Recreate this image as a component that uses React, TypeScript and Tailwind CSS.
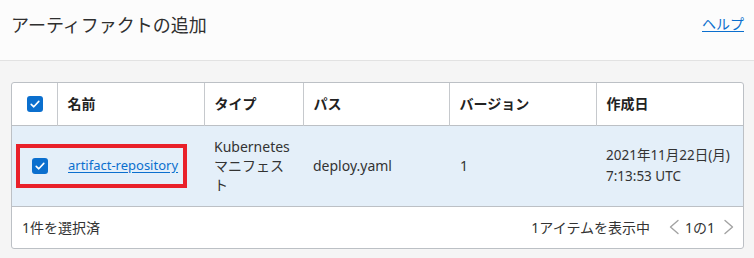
import React from 'react';

const font = { fontFamily: '"Noto Sans", "Noto Sans CJK JP", sans-serif' };

function Checkbox() {
  return (
    <span className="inline-flex h-[16px] w-[16px] items-center justify-center rounded-[3px] bg-[#0b6fce]">
      <svg width="12" height="12" viewBox="0 0 12 12" fill="none">
        <path d="M2.2 6.3 L4.8 8.8 L9.8 3.4" stroke="white" strokeWidth="1.6" strokeLinecap="round" strokeLinejoin="round" />
      </svg>
    </span>
  );
}

function Chevron({ dir }: { dir: 'left' | 'right' }) {
  return (
    <svg width="12" height="16" viewBox="0 0 12 16" fill="none">
      <path
        d={dir === 'left' ? 'M10 1.5 L2.5 8 L10 14.5' : 'M2 1.5 L9.5 8 L2 14.5'}
        stroke="#a3a3a3"
        strokeWidth="1.4"
        strokeLinecap="round"
        strokeLinejoin="round"
      />
    </svg>
  );
}

export default function App() {
  const headers = ['名前', 'タイプ', 'パス', 'バージョン', '作成日'];
  return (
    <div className="h-[258px] w-[754px] overflow-hidden bg-[#f5f5f5] text-[#333]" style={font}>
      <div className="flex h-[61px] items-start justify-between border-b border-[#e2e2e2] bg-[#fcfcfc] pl-[11px] pr-[10px] pt-[11px]">
        <h1 className="text-[18px] font-normal leading-[28px] text-[#2f2f2f]">アーティファクトの追加</h1>
        <a href="#" className="mt-[3px] text-[14px] leading-[20px] text-[#0b6fce] underline underline-offset-2">
          ヘルプ
        </a>
      </div>

      <div className="ml-[11px] mt-[21px] w-[733px] overflow-hidden rounded-[3px] border border-[#bcc0c5] bg-white">
        <table className="w-full table-fixed border-collapse text-[14px]">
          <colgroup>
            <col className="w-[45px]" />
            <col className="w-[147px]" />
            <col className="w-[99px]" />
            <col className="w-[146px]" />
            <col className="w-[147px]" />
            <col />
          </colgroup>
          <thead>
            <tr className="h-[42px] border-b border-[#bcc0c5]">
              <th className="border-r border-[#c6c9cd] text-center align-middle">
                <div className="flex items-center justify-center pl-[1px]">
                  <Checkbox />
                </div>
              </th>
              {headers.map((h, i) => (
                <th
                  key={h}
                  className={`px-[10px] text-left align-middle text-[14px] font-bold text-[#222] ${
                    i < headers.length - 1 ? 'border-r border-[#c6c9cd]' : ''
                  }`}
                >
                  {h}
                </th>
              ))}
            </tr>
          </thead>
          <tbody>
            <tr className="h-[81px] border-b border-[#bcc0c5] bg-[#e4eff9]">
              <td colSpan={2} className="align-middle">
                <div className="ml-[4px] flex h-[44px] w-[171px] items-center border-[4px] border-[#e9202a]">
                  <div className="flex w-[37px] justify-center pl-[2px]">
                    <Checkbox />
                  </div>
                  <a href="#" className="ml-[11px] text-[13px] text-[#0b6fce] underline underline-offset-2">
                    artifact-repository
                  </a>
                </div>
              </td>
              <td className="px-[10px] align-middle leading-[19px] text-[#333]">
                Kubernetes
                <br />
                マニフェスト
              </td>
              <td className="px-[10px] align-middle text-[#333]">deploy.yaml</td>
              <td className="px-[11px] align-middle text-[#333]">1</td>
              <td className="px-[10px] align-middle leading-[21px] text-[#333]">
                <div className="text-[13.5px]">2021年11月22日(月)</div>
                <div className="text-[13.5px]">7:13:53 UTC</div>
              </td>
            </tr>
          </tbody>
        </table>
        <div className="flex h-[41px] items-center justify-between pl-[10px] pr-[8px] text-[14px] text-[#333]">
          <span>1件を選択済</span>
          <div className="flex items-center">
            <span>1アイテムを表示中</span>
            <span className="ml-[18px]">
              <Chevron dir="left" />
            </span>
            <span className="ml-[5px] mr-[8px]">1の1</span>
            <Chevron dir="right" />
          </div>
        </div>
      </div>
    </div>
  );
}
